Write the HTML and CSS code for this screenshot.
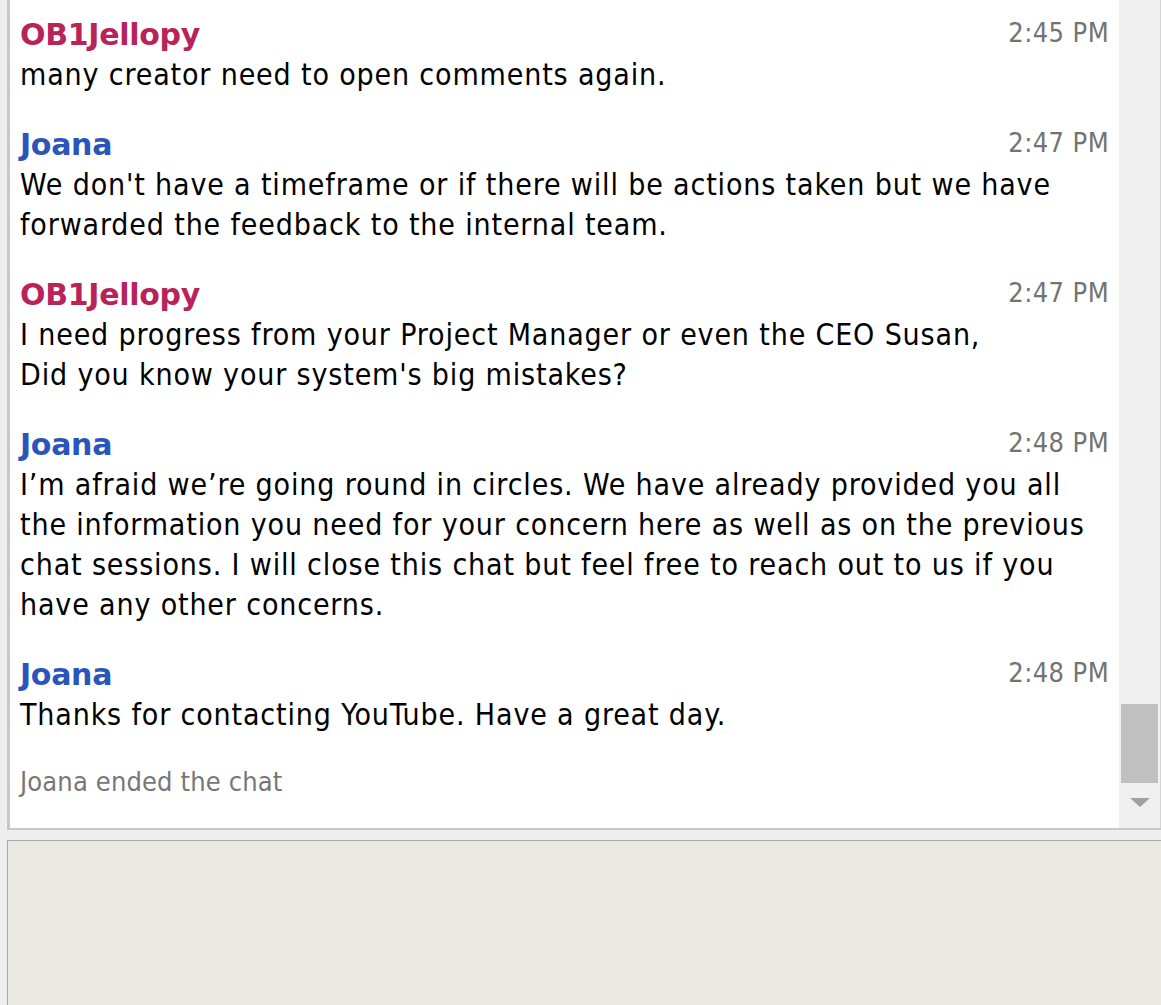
FILE: index.html
```html
<!DOCTYPE html>
<html lang="en">
<head>
<meta charset="utf-8">
<title>Chat</title>
<link rel="stylesheet" href="styles.css">
</head>
<body>
<div class="chat">
  <div class="log">
    <div class="msg">
      <div class="head"><span class="name user">OB1Jellopy</span><span class="time">2:45 PM</span></div>
      <div class="text">many creator need to open comments again.</div>
    </div>
    <div class="msg">
      <div class="head"><span class="name agent">Joana</span><span class="time">2:47 PM</span></div>
      <div class="text">We don't have a timeframe or if there will be actions taken but we have<br>forwarded the feedback to the internal team.</div>
    </div>
    <div class="msg">
      <div class="head"><span class="name user">OB1Jellopy</span><span class="time">2:47 PM</span></div>
      <div class="text">I need progress from your Project Manager or even the CEO Susan,<br>Did you know your system's big mistakes?</div>
    </div>
    <div class="msg">
      <div class="head"><span class="name agent">Joana</span><span class="time">2:48 PM</span></div>
      <div class="text">I’m afraid we’re going round in circles. We have already provided you all<br>the information you need for your concern here as well as on the previous<br>chat sessions. I will close this chat but feel free to reach out to us if you<br>have any other concerns.</div>
    </div>
    <div class="msg">
      <div class="head"><span class="name agent">Joana</span><span class="time">2:48 PM</span></div>
      <div class="text">Thanks for contacting YouTube. Have a great day.</div>
    </div>
    <div class="system">Joana ended the chat</div>
  </div>
  <div class="scrollbar">
    <div class="track"><div class="thumb"></div></div>
    <div class="arrow"></div>
  </div>
</div>
<div class="input"></div>
</body>
</html>
```

FILE: styles.css
```css
html, body {
  margin: 0;
  padding: 0;
  height: 100%;
  overflow: hidden;
}
body {
  background: #eeeeee;
  font-family: "DejaVu Sans Condensed", "DejaVu Sans", sans-serif;
  display: flex;
  flex-direction: column;
}
.chat {
  margin-left: 7px;
  border-left: 3px solid #c8c8c8;
  border-bottom: 2px solid #c8c8c8;
  background: #ffffff;
  display: flex;
  box-sizing: border-box;
  height: 830px;
}
.log {
  flex: 1;
  padding: 15px 10px 0 10px;
  overflow: hidden;
}
.msg {
  margin-bottom: 30px;
}
.head {
  display: flex;
  justify-content: space-between;
  align-items: flex-start;
  height: 40px;
}
.name {
  font-family: "DejaVu Sans", sans-serif;
  font-weight: bold;
  font-size: 30px;
  line-height: 40px;
  letter-spacing: -0.3px;
}
.user { color: #b8235a; }
.agent { color: #2a55bb; }
.time {
  color: #737373;
  font-size: 27px;
  line-height: 36px;
  letter-spacing: 0.4px;
}
.text {
  color: #000;
  font-size: 30px;
  line-height: 40px;
  letter-spacing: 0.85px;
  white-space: nowrap;
}
.system {
  color: #777777;
  font-size: 27px;
  line-height: 40px;
  margin-top: -3px;
  letter-spacing: 0.15px;
}
.scrollbar {
  width: 42px;
  background: #f0f0f0;
  border-right: 1px solid #d4d4d4;
  display: flex;
  flex-direction: column;
  padding: 0 2px 0 2px;
  box-sizing: border-box;
}
.track {
  flex: 1;
  display: flex;
  flex-direction: column;
  justify-content: flex-end;
}
.thumb {
  height: 79px;
  background: #c0c0c0;
}
.arrow {
  align-self: center;
  width: 0;
  height: 0;
  border-left: 10px solid transparent;
  border-right: 10px solid transparent;
  border-top: 9px solid #a0a0a0;
  margin: 15px 0 21px 0;
}
.input {
  flex: 1;
  margin: 10px 0 0 7px;
  border-top: 1px solid #a8a8a8;
  border-left: 1px solid #a8a8a8;
  background: #eae9e1;
}
```
